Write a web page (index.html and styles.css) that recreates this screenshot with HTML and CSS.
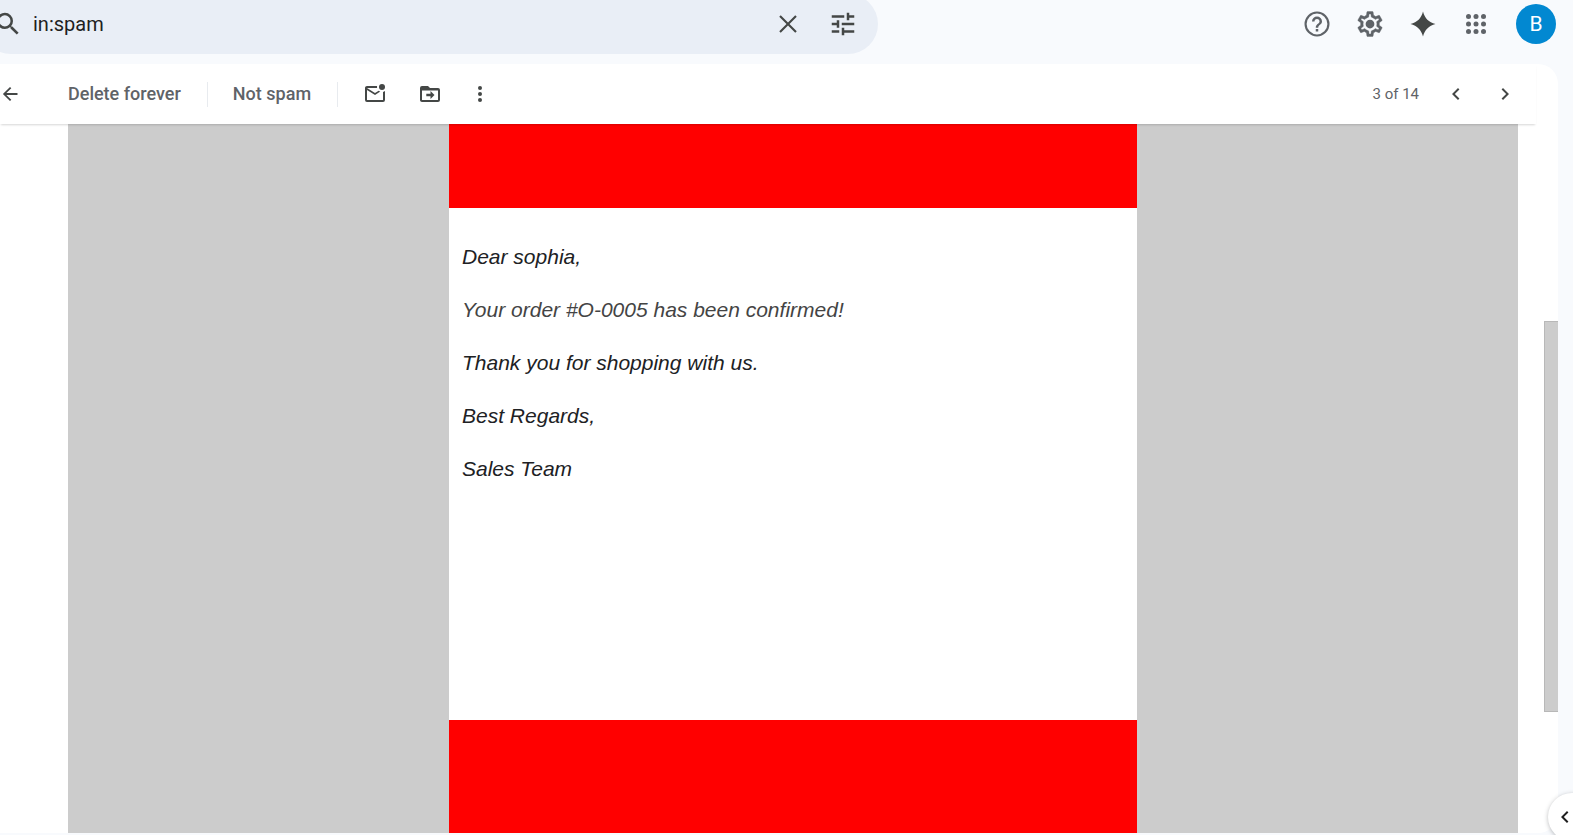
FILE: index.html
```html
<!DOCTYPE html>
<html lang="en">
<head>
<meta charset="utf-8">
<meta name="viewport" content="width=device-width, initial-scale=1">
<title>in:spam</title>
<link rel="stylesheet" href="styles.css">
</head>
<body>
<div class="app">
  <header class="header">
    <form class="search" role="search">
      <button class="icon-btn" type="button" aria-label="Search">
        <svg class="icon-lg" viewBox="0 0 24 24"><path d="M15.5 14h-.79l-.28-.27A6.47 6.47 0 0 0 16 9.5 6.5 6.5 0 1 0 9.5 16c1.61 0 3.09-.59 4.23-1.57l.27.28v.79l5 4.99L20.49 19l-4.99-5zm-6 0a4.5 4.5 0 1 1 0-9 4.5 4.5 0 0 1 0 9z"/></svg>
      </button>
      <input class="search-input" type="text" value="in:spam" aria-label="Search mail">
      <button class="icon-btn" type="button" aria-label="Clear search">
        <svg class="icon-lg" viewBox="0 0 24 24"><path d="M19 6.2 17.8 5 12 10.8 6.2 5 5 6.2 10.8 12 5 17.8 6.2 19 12 13.2 17.8 19 19 17.8 13.2 12z"/></svg>
      </button>
      <button class="icon-btn" type="button" aria-label="Search options">
        <svg class="icon-lg" viewBox="0 0 24 24"><path d="M3 17v2h6v-2H3zM3 5v2h10V5H3zm10 16v-2h8v-2h-8v-2h-2v6h2zM7 9v2H3v2h4v2h2V9H7zm14 4v-2H11v2h10zm-6-4h2V7h4V5h-4V3h-2v6z"/></svg>
      </button>
    </form>
    <nav class="header-actions" aria-label="Account tools">
      <button class="icon-btn muted" type="button" aria-label="Support">
        <svg class="icon-lg" viewBox="0 0 24 24"><path d="M11 18h2v-2h-2v2zm1-16a10 10 0 1 0 0 20 10 10 0 0 0 0-20zm0 18.3a8.3 8.3 0 1 1 0-16.6 8.3 8.3 0 0 1 0 16.6zM12 6a4 4 0 0 0-4 4h2a2 2 0 1 1 4 0c0 2-3 1.75-3 5h2c0-2.25 3-2.5 3-5a4 4 0 0 0-4-4z"/></svg>
      </button>
      <button class="icon-btn muted" type="button" aria-label="Settings">
        <svg class="icon-lg" viewBox="0 0 24 24"><path stroke="currentColor" stroke-width=".3" d="M19.43 12.98c.04-.32.07-.64.07-.98 0-.34-.03-.66-.07-.98l2.11-1.65c.19-.15.24-.42.12-.64l-2-3.46c-.09-.16-.26-.25-.44-.25-.06 0-.12.01-.17.03l-2.49 1c-.52-.4-1.08-.73-1.69-.98l-.38-2.65C14.46 2.18 14.25 2 14 2h-4c-.25 0-.46.18-.49.42l-.38 2.65c-.61.25-1.17.59-1.69.98l-2.49-1c-.06-.02-.12-.03-.18-.03-.17 0-.34.09-.43.25l-2 3.46c-.13.22-.07.49.12.64l2.11 1.65c-.04.32-.07.65-.07.98 0 .33.03.66.07.98l-2.11 1.65c-.19.15-.24.42-.12.64l2 3.46c.09.16.26.25.44.25.06 0 .12-.01.17-.03l2.49-1c.52.4 1.08.73 1.69.98l.38 2.65c.03.24.24.42.49.42h4c.25 0 .46-.18.49-.42l.38-2.65c.61-.25 1.17-.59 1.69-.98l2.49 1c.06.02.12.03.18.03.17 0 .34-.09.43-.25l2-3.46c.12-.22.07-.49-.12-.64l-2.11-1.65zm-1.98-1.71c.04.31.05.52.05.73 0 .21-.02.43-.05.73l-.14 1.13.89.7 1.08.84-.7 1.21-1.27-.51-1.04-.42-.9.68c-.43.32-.84.56-1.25.73l-1.06.43-.16 1.13-.2 1.35h-1.4l-.19-1.35-.16-1.13-1.06-.43c-.43-.18-.83-.41-1.23-.71l-.91-.7-1.06.43-1.27.51-.7-1.21 1.08-.84.89-.7-.14-1.13c-.03-.31-.05-.54-.05-.74s.02-.43.05-.73l.14-1.13-.89-.7-1.08-.84.7-1.21 1.27.51 1.04.42.9-.68c.43-.32.84-.56 1.25-.73l1.06-.43.16-1.13.2-1.35h1.39l.19 1.35.16 1.13 1.06.43c.43.18.83.41 1.23.71l.91.7 1.06-.43 1.27-.51.7 1.21-1.07.85-.89.7.14 1.13z"/><circle cx="12" cy="12" r="3.5"/></svg>
      </button>
      <button class="icon-btn" type="button" aria-label="Ask Gemini">
        <svg class="icon-lg" viewBox="0 0 24 24"><path d="M12 2c1.4 5.4 4.6 8.6 10 10-5.4 1.4-8.6 4.6-10 10-1.4-5.4-4.6-8.6-10-10 5.4-1.4 8.6-4.6 10-10z"/></svg>
      </button>
      <button class="icon-btn muted" type="button" aria-label="Google apps">
        <svg class="icon-lg" viewBox="0 0 24 24"><circle cx="6" cy="6" r="2"/><circle cx="12" cy="6" r="2"/><circle cx="18" cy="6" r="2"/><circle cx="6" cy="12" r="2"/><circle cx="12" cy="12" r="2"/><circle cx="18" cy="12" r="2"/><circle cx="6" cy="18" r="2"/><circle cx="12" cy="18" r="2"/><circle cx="18" cy="18" r="2"/></svg>
      </button>
      <button class="avatar" type="button" aria-label="Account B">B</button>
    </nav>
  </header>

  <main class="panel">
    <div class="toolbar" role="toolbar" aria-label="Message actions">
      <button class="icon-btn back" type="button" aria-label="Back to Spam">
        <svg class="icon" viewBox="0 0 24 24"><path d="M19.5 11.1H8.4l4.9-4.9L12 4.9 4.9 12l7.1 7.1 1.3-1.3-4.9-4.9h11.1z"/></svg>
      </button>
      <button class="text-btn" type="button">Delete forever</button>
      <span class="divider"></span>
      <button class="text-btn" type="button">Not spam</button>
      <span class="divider"></span>
      <div class="message-tools">
        <button class="icon-btn" type="button" aria-label="Mark as unread">
          <svg class="icon" viewBox="0 0 24 24"><path d="M22 9v9a2 2 0 0 1-2 2H4a2 2 0 0 1-2-2V6c0-1.1.9-2 2-2h10.1a5 5 0 0 0 0 2H4l8 5 3.7-2.3c.5.4 1 .7 1.6.9L12 13 4 8v10h16V9.9A5 5 0 0 0 22 9z"/><circle cx="19" cy="5" r="3"/></svg>
        </button>
        <button class="icon-btn" type="button" aria-label="Move to">
          <svg class="icon" viewBox="0 0 24 24"><path d="M20 6h-8l-2-2H4a2 2 0 0 0-2 2v12c0 1.1.9 2 2 2h16a2 2 0 0 0 2-2V8a2 2 0 0 0-2-2zm0 12H4V8.5h16V18zm-7.500-1 4-4-4-4v2.800H8.300v2.400h4.200z"/></svg>
        </button>
        <button class="icon-btn more" type="button" aria-label="More">
          <svg class="icon" viewBox="0 0 24 24"><circle cx="12" cy="6" r="2"/><circle cx="12" cy="12" r="2"/><circle cx="12" cy="18" r="2"/></svg>
        </button>
      </div>
      <div class="pager">
        <span class="count">3 of 14</span>
        <button class="icon-btn" type="button" aria-label="Newer">
          <svg class="icon" viewBox="0 0 24 24"><path d="M15.41 7.41 14 6l-6 6 6 6 1.41-1.41L10.83 12z"/></svg>
        </button>
        <button class="icon-btn" type="button" aria-label="Older">
          <svg class="icon" viewBox="0 0 24 24"><path d="M10 6 8.59 7.41 13.17 12l-4.58 4.59L10 18l6-6z"/></svg>
        </button>
      </div>
    </div>

    <div class="content">
      <div class="mail">
        <article class="letter">
          <div class="band band-top"></div>
          <div class="letter-body">
            <p>Dear sophia,</p>
            <p class="soft">Your order #O-0005 has been confirmed!</p>
            <p>Thank you for shopping with us.</p>
            <p>Best Regards,</p>
            <p>Sales Team</p>
          </div>
          <div class="band band-bottom"></div>
        </article>
      </div>
      <div class="scroll-track"><div class="scroll-thumb"></div></div>
    </div>
  </main>
  <button class="side-tab" type="button" aria-label="Show side panel">
    <svg class="icon" viewBox="0 0 24 24"><path d="M15.41 7.41 14 6l-6 6 6 6 1.41-1.41L10.83 12z"/></svg>
  </button>
</div>
</body>
</html>
```

FILE: styles.css
```css
* {
  box-sizing: border-box;
}

body {
  margin: 0;
  background: #f8fafd;
  color: #202124;
  font-family: Roboto, "Liberation Sans", sans-serif;
}

button {
  margin: 0;
  padding: 0;
  border: 0;
  background: none;
  color: inherit;
  font: inherit;
  cursor: pointer;
}

svg {
  display: block;
  flex: none;
  fill: currentColor;
}

.icon {
  width: 24px;
  height: 24px;
}

.icon-lg {
  width: 30px;
  height: 30px;
}

.icon-btn {
  display: flex;
  align-items: center;
  justify-content: center;
  flex: none;
  color: #444746;
}

.icon-btn.muted {
  color: #5f6368;
}

.app {
  position: relative;
  display: flex;
  flex-direction: column;
  height: 100vh;
  padding-bottom: 2px;
  overflow: hidden;
}

.header {
  display: flex;
  align-items: flex-start;
  justify-content: space-between;
  height: 64px;
  flex: none;
}

/* The pill runs past the top and left window edges. */
.search {
  display: flex;
  align-items: center;
  gap: 25px;
  width: 57%;
  height: 60px;
  margin: -6px 0 0 -19px;
  padding: 0 20px 0 12px;
  border-radius: 30px;
  background: #e9eef6;
}

.search-input {
  flex: 1;
  min-width: 0;
  margin-left: -15px;
  padding: 0;
  border: 0;
  outline: 0;
  background: none;
  color: #1f1f1f;
  font: 20px/28px Roboto, "Liberation Sans", sans-serif;
}

.header-actions {
  display: flex;
  align-items: center;
  gap: 23px;
  height: 48px;
  padding-right: 17px;
}

.avatar {
  width: 40px;
  height: 40px;
  margin-left: 2px;
  border-radius: 50%;
  background: #0288d1;
  color: #fff;
  font-size: 21px;
}

.panel {
  display: flex;
  flex: 1;
  flex-direction: column;
  min-height: 0;
  margin-right: 15px;
  border-radius: 0 20px 20px 0;
  background: #fff;
  overflow: hidden;
}

.toolbar {
  z-index: 1;
  display: flex;
  align-items: center;
  flex: none;
  height: 60px;
  margin-right: 22px;
  padding-right: 19px;
  background: #fff;
  box-shadow: 0 2px 2px -1px rgba(0, 0, 0, 0.16);
}

.back {
  width: 20px;
  margin-right: 48px;
}

.text-btn {
  color: #5f6368;
  font-size: 18px;
  font-weight: 500;
  line-height: 24px;
}

.divider {
  width: 1px;
  height: 25px;
  margin: 0 25px 0 26px;
  background: #e8ebef;
}

.message-tools {
  display: flex;
  gap: 31px;
}

.more {
  width: 14px;
}

.pager {
  display: flex;
  align-items: center;
  gap: 25px;
  margin-left: auto;
}

.count {
  color: #5f6368;
  font-size: 15px;
}

.content {
  display: flex;
  flex: 1;
  min-height: 0;
  padding-left: 68px;
}

.mail {
  display: flex;
  flex: 1;
  justify-content: center;
  background: #ccc;
}

.letter {
  display: flex;
  flex-direction: column;
  width: 688px;
  background: #fff;
}

.band {
  flex: none;
  background: #f00;
}

.band-top {
  height: 84px;
}

.band-bottom {
  height: 113px;
}

.letter-body {
  flex: 1;
  padding: 35px 13px;
  font: italic 21px/28px "Liberation Sans", Arial, sans-serif;
}

.letter-body p {
  margin: 0 0 25px;
}

.letter-body .soft {
  color: #444;
}

.scroll-track {
  display: flex;
  flex-direction: column;
  align-items: flex-end;
  width: 40px;
  padding-top: 197px;
}

.scroll-thumb {
  width: 14px;
  height: 391px;
  border: 1px solid #b8b8b8;
  border-right: 0;
  background: #ccc;
}

.side-tab {
  position: absolute;
  right: -23px;
  bottom: -6px;
  display: flex;
  align-items: center;
  width: 48px;
  height: 48px;
  padding-left: 5px;
  border-radius: 50%;
  background: #fff;
  color: #1f1f1f;
  box-shadow: 0 1px 4px rgba(60, 64, 67, 0.35);
}
```
